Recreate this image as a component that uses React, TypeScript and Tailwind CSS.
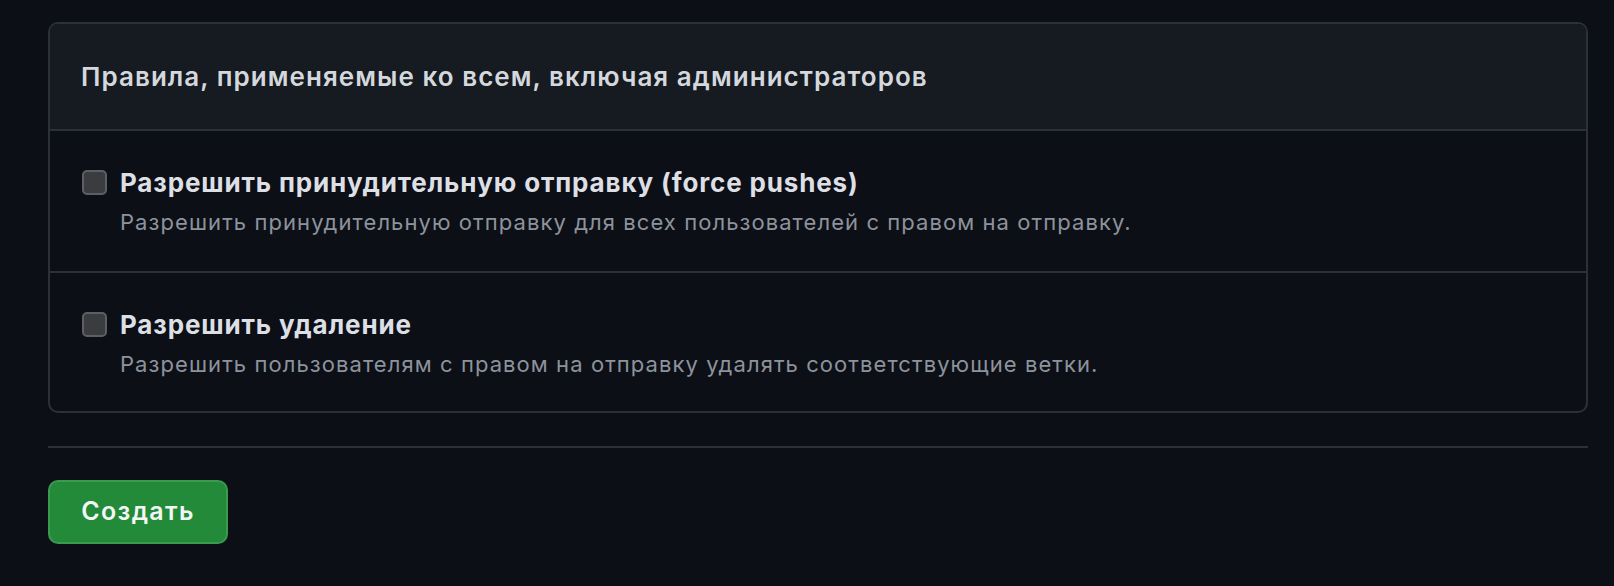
export default function App() {
  const rules = [
    {
      title: 'Разрешить принудительную отправку (force pushes)',
      desc: 'Разрешить принудительную отправку для всех пользователей с правом на отправку.',
    },
    {
      title: 'Разрешить удаление',
      desc: 'Разрешить пользователям с правом на отправку удалять соответствующие ветки.',
    },
  ]

  return (
    <div
      className="min-h-[586px] w-full bg-[#0c0f16] pl-[48px] pr-[26px] pt-[22px] pb-[40px]"
      style={{ fontFamily: 'Inter, "Liberation Sans", sans-serif' }}
    >
      {/* Rules box */}
      <div className="rounded-[10px] border-2 border-[#2c3038] overflow-hidden">
        <div className="h-[107px] bg-[#161a21] border-b-2 border-[#2c3038] flex items-center px-[31px]">
          <h2 className="text-[26px] font-semibold tracking-[1.05px] text-[#d4d8dd]">
            Правила, применяемые ко всем, включая администраторов
          </h2>
        </div>
        {rules.map((r, i) => (
          <div
            key={i}
            className={
              'h-[140px] flex items-start gap-[13px] px-[32px] pt-[38px] ' +
              (i > 0 ? 'border-t-2 border-[#2c3038]' : '')
            }
          >
            <div className="mt-[1px] w-[25px] h-[25px] rounded-[5px] bg-[#3b3c40] border-2 border-[#5c5f66] flex-shrink-0" />
            <div className="flex flex-col">
              <span className="text-[26px] font-bold leading-[28px] tracking-[0.85px] text-[#dcdfe4]">{r.title}</span>
              <span className="text-[22px] leading-[26px] mt-[12px] tracking-[1.07px] text-[#8d939c]">{r.desc}</span>
            </div>
          </div>
        ))}
      </div>

      <div className="mt-[33px] h-[2px] bg-[#2c3038]" />

      <button className="mt-[32px] w-[180px] h-[64px] rounded-[10px] bg-[#238a3a] border-2 border-[#3a9a4f] text-[25px] font-semibold tracking-[1.3px] text-[#f2f7f3]">
        Создать
      </button>
    </div>
  )
}
